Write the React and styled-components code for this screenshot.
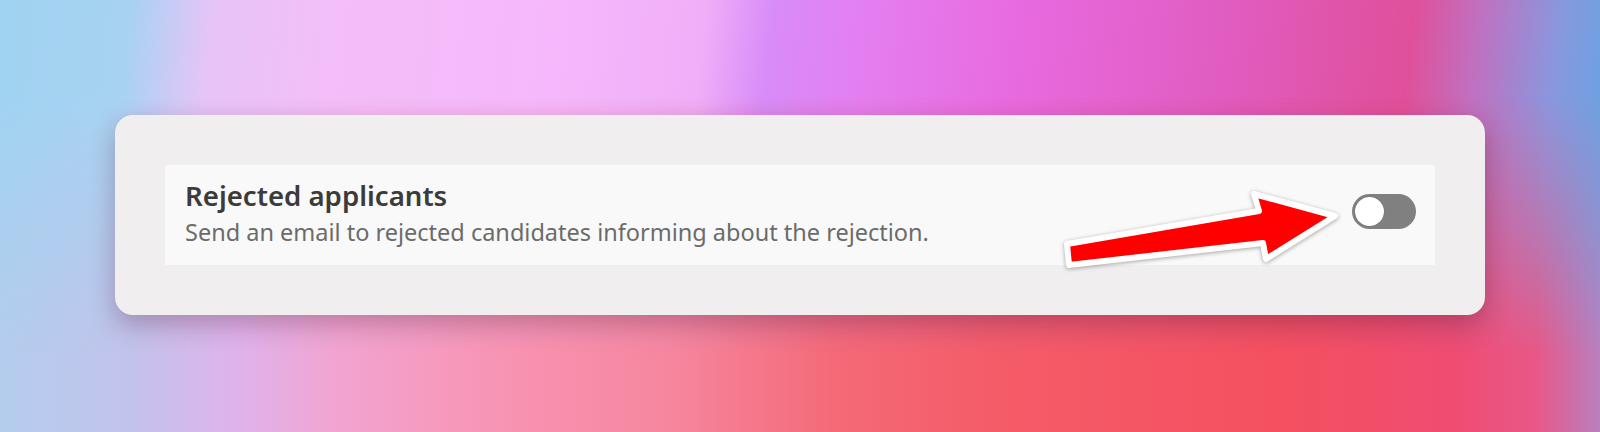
import React from "react";
import styled, { createGlobalStyle } from "styled-components";

const GlobalStyle = createGlobalStyle`
  * {
    box-sizing: border-box;
  }
  body {
    margin: 0;
    font-family: "Noto Sans", "Open Sans", "Liberation Sans", sans-serif;
  }
`;

// blurred wallpaper: bottom colours on the page, top colours faded in from above
const Page = styled.div`
  position: relative;
  width: 1600px;
  height: 432px;
  overflow: hidden;
  padding: 115px 115px 0;
  background: linear-gradient(
    90deg,
    #b4cdee 0%,
    #c2c3ec 8%,
    #e0b2ec 15%,
    #f2a4d0 21%,
    #f894b4 31%,
    #f6869e 42%,
    #f46a78 52%,
    #f45c68 62%,
    #f45060 80%,
    #f04c72 91%,
    #e85888 96%,
    #b880c0 100%
  );

  &::before {
    content: "";
    position: absolute;
    inset: 0;
    background: linear-gradient(
      96deg,
      #9fd3f0 0%,
      #a8d2f2 8%,
      #e6c4f8 13%,
      #f3bef9 20%,
      #f6b8fb 34%,
      #f0aef8 43%,
      #d88cf8 47%,
      #e47ef0 53%,
      #e86ae0 62%,
      #e05cc0 75%,
      #e0509a 86%,
      #c070c0 90%,
      #8898de 95%,
      #5aa8e4 100%
    );
    -webkit-mask-image: linear-gradient(to bottom, #000 22%, transparent 82%);
    mask-image: linear-gradient(to bottom, #000 22%, transparent 82%);
  }
`;

const Card = styled.div`
  position: relative;
  background: #f1eeef;
  border-radius: 18px;
  padding: 50px;
  box-shadow: 0 10px 26px rgba(70, 20, 40, 0.3);
`;

const Row = styled.div`
  position: relative;
  height: 100px;
  background: #f9f9f9;
  display: flex;
  justify-content: space-between;
  align-items: flex-start;
  padding: 14px 19px 0 20px;
`;

const Texts = styled.div`
  display: flex;
  flex-direction: column;
  gap: 7px;
`;

const Title = styled.div`
  font-size: 27.6px;
  line-height: 32px;
  font-weight: 600;
  color: #3b3b3b;
`;

const Subtitle = styled.div`
  font-size: 23.5px;
  line-height: 28px;
  color: #6b6b6b;
`;

const Track = styled.div`
  margin-top: 15px;
  width: 64px;
  height: 35px;
  border-radius: 18px;
  background: ${(p) => (p.$on ? "#3b82f6" : "#808080")};
  padding: 3px;
  display: flex;
  justify-content: ${(p) => (p.$on ? "flex-end" : "flex-start")};
`;

const Knob = styled.div`
  width: 29px;
  height: 29px;
  border-radius: 50%;
  background: #ffffff;
  box-shadow: 0 0 1px rgba(0, 0, 0, 0.4);
`;

const Arrow = styled.svg`
  position: absolute;
  left: 890px;
  top: 21px;
  overflow: visible;
  filter: drop-shadow(0 1px 2px rgba(0, 0, 0, 0.35));
`;

export default function App() {
  return (
    <>
      <GlobalStyle />
      <Page>
        <Card>
          <Row>
            <Texts>
              <Title>Rejected applicants</Title>
              <Subtitle>
                Send an email to rejected candidates informing about the rejection.
              </Subtitle>
            </Texts>
            <Track $on={false}>
              <Knob />
            </Track>
            <Arrow width="290" height="90" viewBox="0 0 290 90">
              <polygon
                points="12,58 204,25 199,8 280,30 211,73 208,57 14,79"
                fill="#ff0000"
                stroke="#ffffff"
                strokeWidth="6"
                strokeLinejoin="round"
              />
            </Arrow>
          </Row>
        </Card>
      </Page>
    </>
  );
}
